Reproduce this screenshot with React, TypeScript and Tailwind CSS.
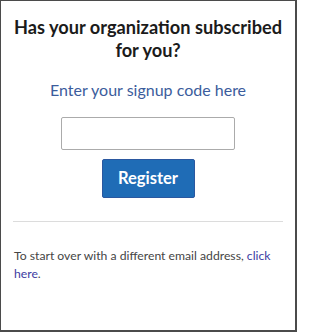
export default function App() {
  return (
    <div
      className="w-[297px] h-[332px] bg-white border-l border-t border-r-2 border-b-2 border-[#4b4b4b] flex flex-col"
      style={{ fontFamily: 'Lato, "Noto Sans", sans-serif' }}
    >
      <h1 className="mt-[15px] text-center text-[18.2px] leading-[23px] font-bold text-[#1b1b1b]">
        Has your organization subscribed
        <br />
        for you?
      </h1>

      <p className="mt-[18px] text-center text-[16px] leading-[20px] text-[#3b5c9c]">
        Enter your signup code here
      </p>

      <div className="mt-[17px] flex justify-center">
        <input
          type="text"
          className="w-[174px] h-[33px] border border-[#ababab] rounded-[2px] bg-white outline-none"
        />
      </div>

      <div className="mt-[9px] flex justify-center">
        <button className="w-[93px] h-[39px] bg-[#1f6cb6] border border-[#2b58a0] rounded-[2px] text-white text-[16.5px] font-bold">
          Register
        </button>
      </div>

      <div className="mx-[12px] mt-[23px] border-t border-[#dcdcdc]" />

      <p className="mx-[13px] mt-[25px] text-[12.2px] leading-[18px] text-[#454545]">
        To start over with a different email address,{' '}
        <a className="text-[#3c3ca2] cursor-pointer">click</a>{' '}
        <a className="text-[#3c3ca2] cursor-pointer">here</a>.
      </p>
    </div>
  )
}
